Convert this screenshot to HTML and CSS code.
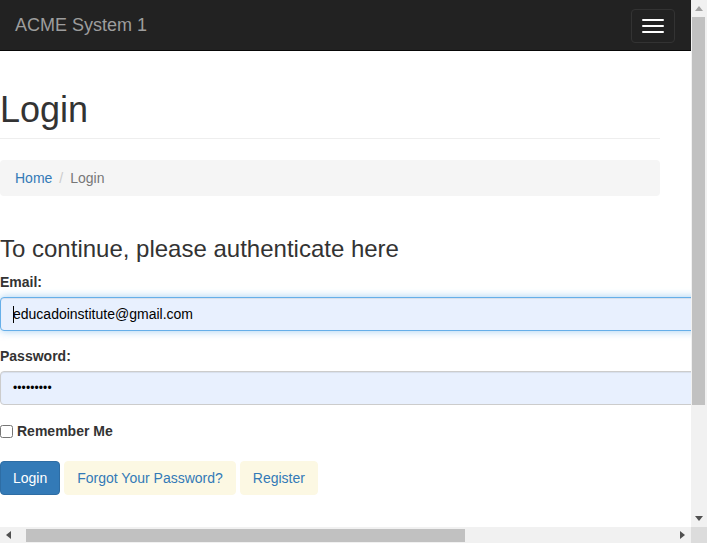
FILE: index.html
```html
<!DOCTYPE html>
<html lang="en">
<head>
<meta charset="utf-8">
<title>Login - ACME System 1</title>
<link rel="stylesheet" href="styles.css">
</head>
<body>
<div class="window">
  <div class="viewport">
    <nav class="navbar">
      <a class="brand" href="#">ACME System 1</a>
      <button class="toggle" type="button" aria-label="Toggle navigation">
        <span class="bar"></span><span class="bar"></span><span class="bar"></span>
      </button>
    </nav>
    <main class="content">
      <h1 class="page-header">Login</h1>
      <ol class="breadcrumb">
        <li><a href="#">Home</a></li>
        <li class="sep">/</li>
        <li class="active">Login</li>
      </ol>
      <h3 class="lead-title">To continue, please authenticate here</h3>
      <form class="login-form">
        <div class="form-group">
          <label class="field-label" for="email">Email:</label>
          <input class="form-control focused" id="email" type="email" value="educadoinstitute@gmail.com">
        </div>
        <div class="form-group">
          <label class="field-label" for="password">Password:</label>
          <input class="form-control" id="password" type="password" value="secret123">
        </div>
        <div class="checkbox">
          <label><input type="checkbox" class="check"> Remember Me</label>
        </div>
        <div class="actions">
          <button class="btn btn-primary" type="button">Login</button>
          <a class="btn btn-soft" href="#">Forgot Your Password?</a>
          <a class="btn btn-soft" href="#">Register</a>
        </div>
      </form>
    </main>
  </div>
  <div class="vscroll">
    <div class="arrow-cell"><svg width="8" height="5" viewBox="0 0 8 5"><path d="M0 5 L4 0 L8 5 Z" fill="#a3a3a3"/></svg></div>
    <div class="vtrack"><div class="vthumb"></div></div>
    <div class="arrow-cell"><svg width="8" height="5" viewBox="0 0 8 5"><path d="M0 0 L8 0 L4 5 Z" fill="#505050"/></svg></div>
  </div>
  <div class="hscroll">
    <div class="arrow-cell h"><svg width="5" height="8" viewBox="0 0 5 8"><path d="M5 0 L5 8 L0 4 Z" fill="#505050"/></svg></div>
    <div class="htrack"><div class="hthumb"></div></div>
    <div class="arrow-cell h"><svg width="5" height="8" viewBox="0 0 5 8"><path d="M0 0 L5 4 L0 8 Z" fill="#505050"/></svg></div>
  </div>
  <div class="corner"></div>
</div>
</body>
</html>
```

FILE: styles.css
```css
html, body {
  margin: 0;
  padding: 0;
  background: #fff;
}

body {
  font-family: "Liberation Sans", Arial, Helvetica, sans-serif;
  font-size: 14px;
  line-height: 20px;
  color: #333;
}

.window {
  width: 707px;
  height: 543px;
  display: grid;
  grid-template-columns: 691px 16px;
  grid-template-rows: 527px 16px;
  overflow: hidden;
}

.viewport {
  overflow: hidden;
  display: flex;
  flex-direction: column;
  min-width: 0;
}

/* Navbar */
.navbar {
  flex: none;
  height: 50px;
  background: #222;
  border-bottom: 1px solid #080808;
  display: flex;
  align-items: center;
  justify-content: space-between;
  padding: 0 15px 0 15px;
}

.brand {
  color: #9d9d9d;
  font-size: 18px;
  line-height: 20px;
  text-decoration: none;
}

.toggle {
  width: 44px;
  height: 34px;
  padding: 9px 10px;
  margin: 1px 1px 0 0;
  background: transparent;
  border: 1px solid #333;
  border-radius: 4px;
  display: flex;
  flex-direction: column;
  gap: 4px;
  box-sizing: border-box;
}

.bar {
  display: block;
  width: 22px;
  height: 2px;
  background: #fff;
  border-radius: 1px;
}

/* Content */
.content {
  padding-top: 39px;
}

.page-header {
  width: 660px;
  margin: 0 0 21px;
  padding-bottom: 9px;
  border-bottom: 1px solid #eee;
  font-size: 36px;
  font-weight: 500;
  line-height: 39px;
  color: #333;
}

.breadcrumb {
  width: 660px;
  box-sizing: border-box;
  margin: 0 0 20px;
  padding: 8px 15px;
  list-style: none;
  background: #f5f5f5;
  border-radius: 4px;
  display: flex;
  gap: 5px;
}

.breadcrumb a {
  color: #337ab7;
  text-decoration: none;
}

.breadcrumb .sep {
  color: #ccc;
  padding: 0 2px;
}

.breadcrumb .active {
  color: #777;
}

.lead-title {
  margin: 40px 0 10px;
  font-size: 24px;
  font-weight: 500;
  line-height: 26.4px;
  color: #333;
}

.form-group {
  margin-bottom: 15px;
}

.field-label {
  display: inline-block;
  margin-bottom: 5px;
  font-weight: 700;
}

.form-control {
  display: block;
  width: 1004px;
  height: 34px;
  box-sizing: border-box;
  padding: 6px 12px;
  font-family: "Liberation Sans", Arial, sans-serif;
  font-size: 14px;
  line-height: 20px;
  color: #000;
  background: #e8f0fe;
  border: 1px solid #ccc;
  border-radius: 4px;
  box-shadow: inset 0 1px 1px rgba(0, 0, 0, .075);
  outline: none;
}

.form-control.focused {
  border-color: #66afe9;
  box-shadow: inset 0 1px 1px rgba(0, 0, 0, .075), 0 0 8px rgba(102, 175, 233, .6);
  background: linear-gradient(#000, #000) no-repeat 12px 50% / 1px 17px, #e8f0fe;
}

#password {
  font-size: 12px;
  letter-spacing: 0.1px;
}

.checkbox {
  padding-top: 1px;
  margin: 0 0 20px;
}

.checkbox label {
  font-weight: 700;
  display: flex;
  align-items: center;
  gap: 4px;
}

.check {
  width: 13px;
  height: 13px;
  margin: 1px 0 0;
}

.actions {
  display: flex;
  gap: 4px;
}

.btn {
  display: inline-block;
  box-sizing: border-box;
  height: 34px;
  padding: 6px 12px;
  font-family: "Liberation Sans", Arial, sans-serif;
  font-size: 14px;
  line-height: 20px;
  border: 1px solid transparent;
  border-radius: 4px;
  text-decoration: none;
  cursor: pointer;
}

.btn-primary {
  color: #fff;
  background: #337ab7;
  border-color: #2e6da4;
}

.btn-soft {
  color: #337ab7;
  background: #fcf8e3;
  border-color: #fcf8e3;
}

/* Scrollbars */
.vscroll {
  background: #f1f1f1;
  display: flex;
  flex-direction: column;
}

.arrow-cell {
  flex: none;
  height: 17px;
  display: flex;
  align-items: center;
  justify-content: center;
}

.arrow-cell.h {
  width: 17px;
  height: 16px;
}

.vtrack {
  flex: 1;
  display: flex;
  flex-direction: column;
}

.vthumb {
  height: 388px;
  margin: 0 2px 0 1px;
  background: #c1c1c1;
}

.hscroll {
  background: #f1f1f1;
  display: flex;
}

.htrack {
  flex: 1;
  display: flex;
  align-items: center;
  padding-left: 9px;
}

.hthumb {
  width: 439px;
  height: 13px;
  margin-top: 1px;
  background: #c1c1c1;
}

.corner {
  background: #dcdcdc;
}
```
